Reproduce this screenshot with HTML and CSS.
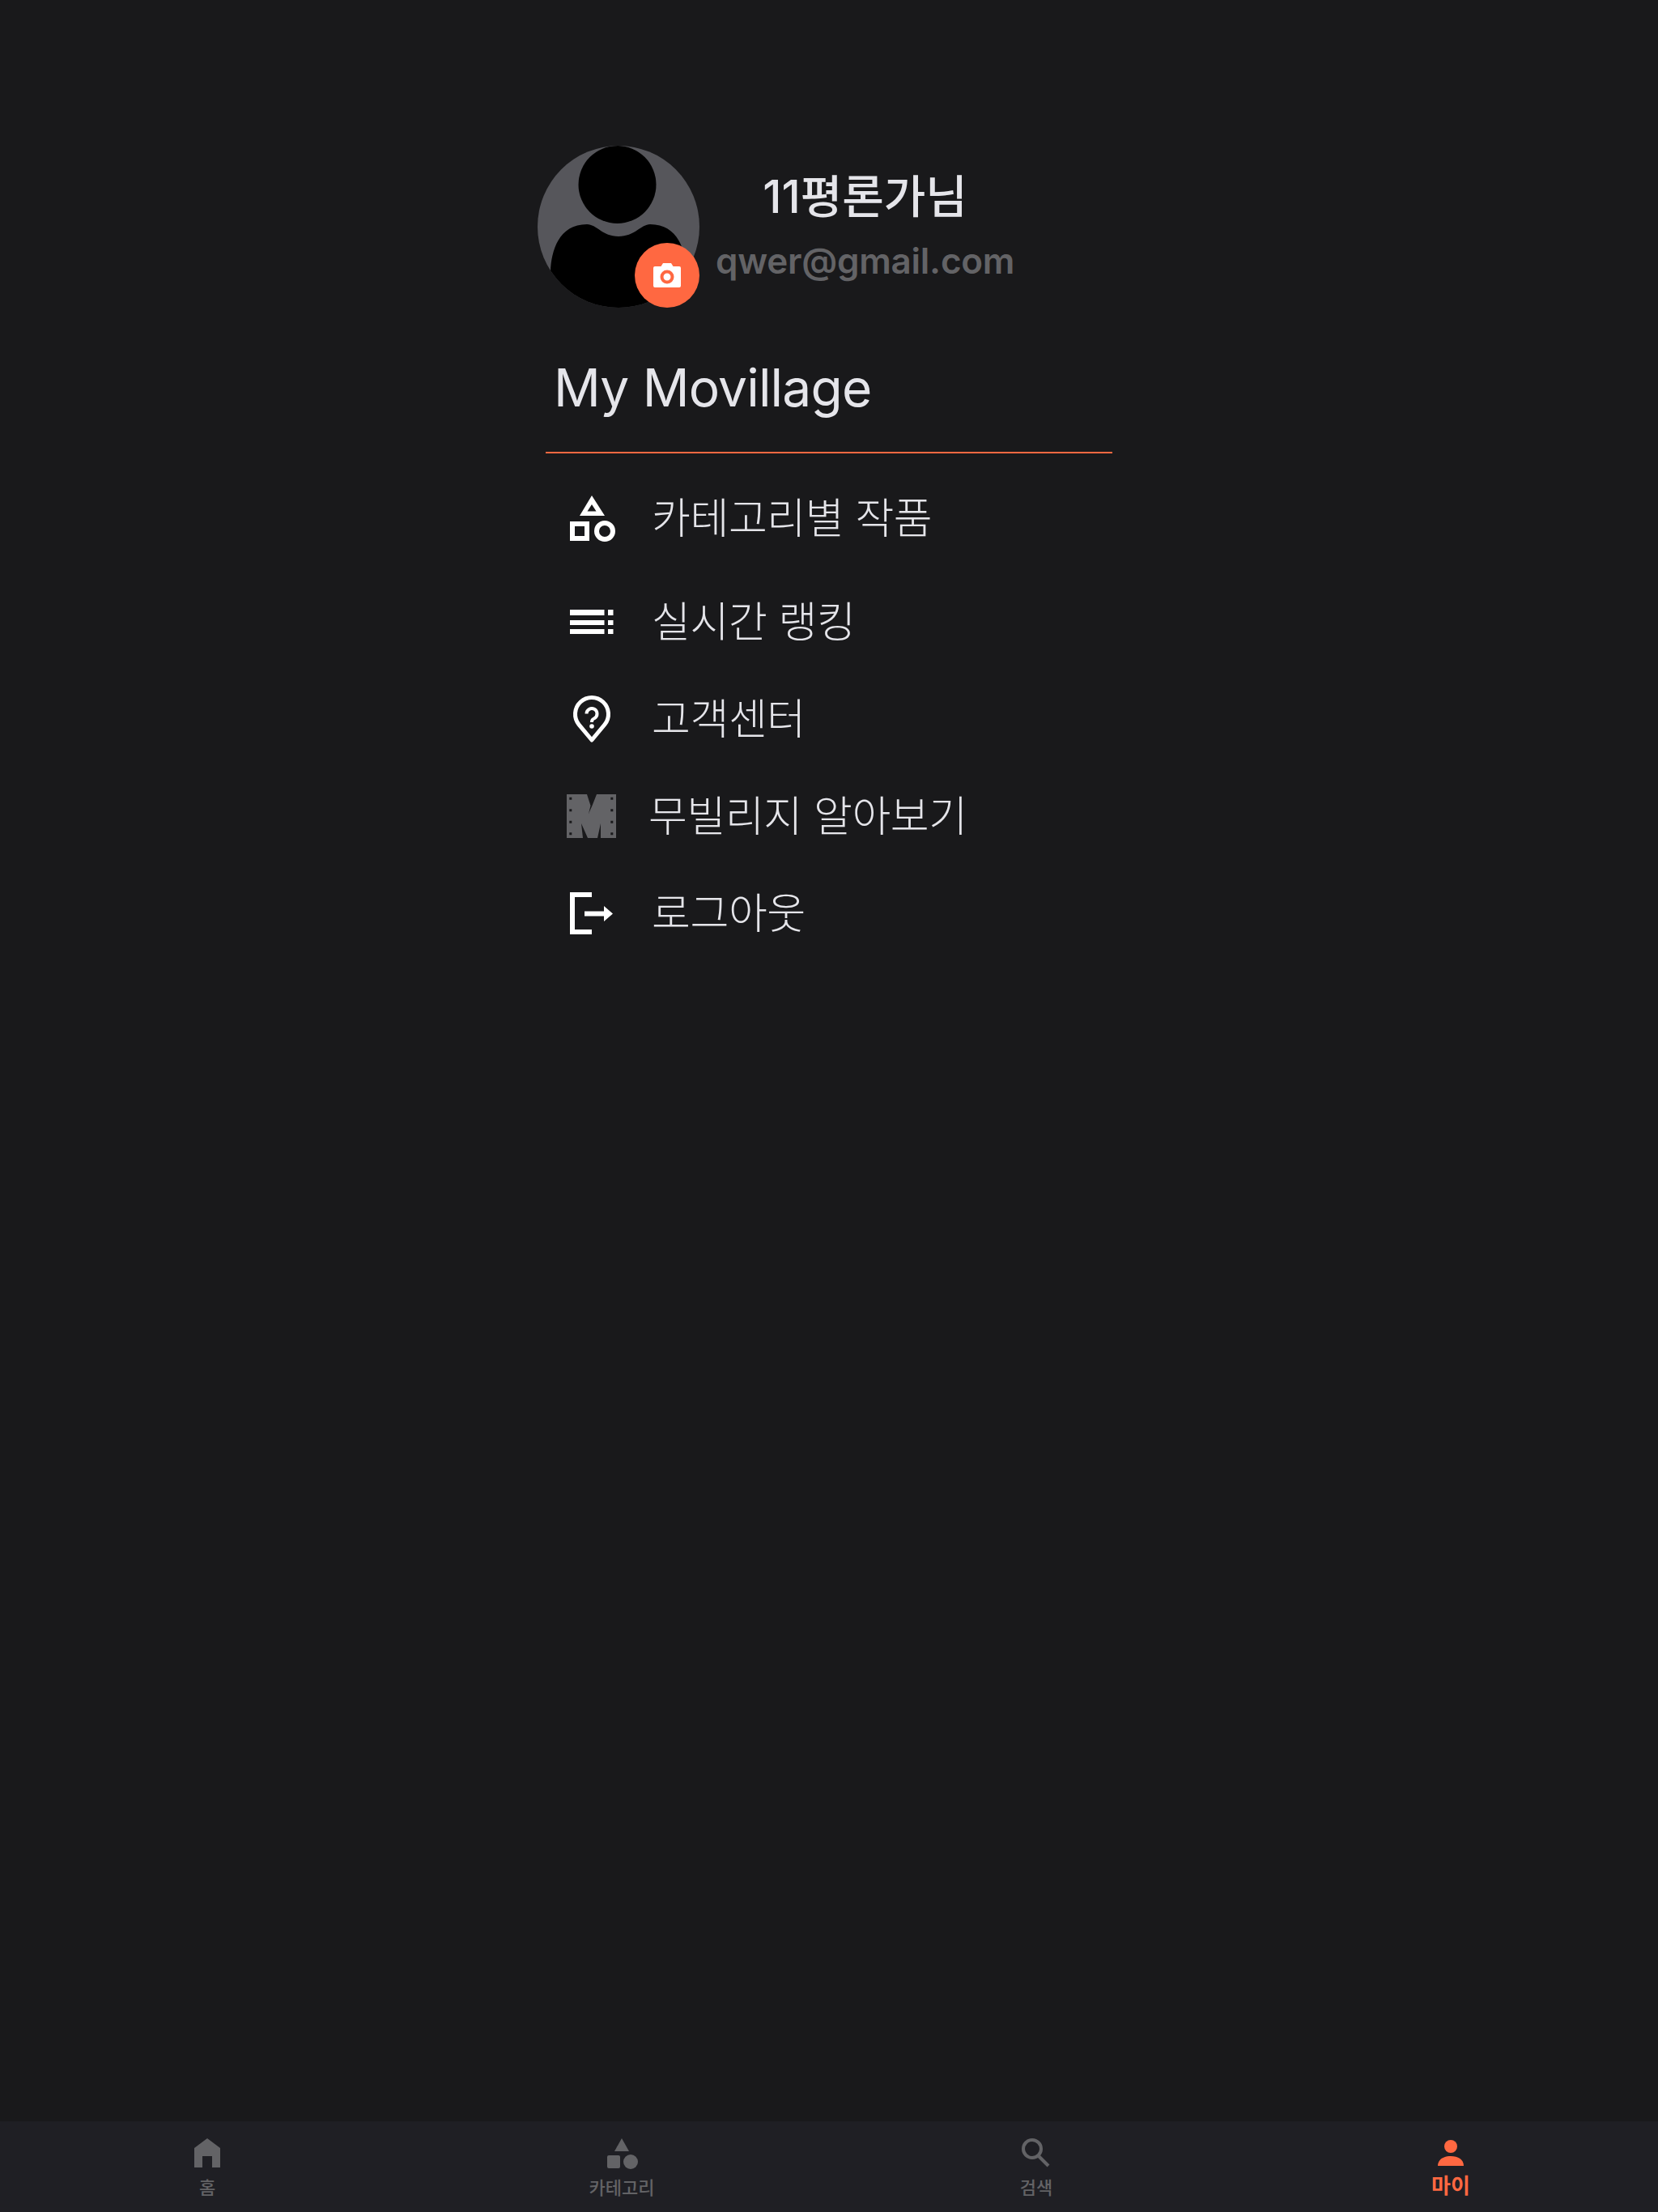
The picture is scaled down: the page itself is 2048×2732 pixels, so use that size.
FILE: index.html
```html
<!DOCTYPE html>
<html lang="ko">
<head>
<meta charset="utf-8">
<title>My Movillage</title>
<link rel="stylesheet" href="styles.css">
</head>
<body>
<div class="app">
  <main class="page">
    <section class="profile">
      <div class="avatar">
        <svg class="avatar-img" viewBox="0 0 200 200">
          <defs><clipPath id="av"><circle cx="100" cy="100" r="100"/></clipPath></defs>
          <circle cx="100" cy="100" r="100" fill="#56565b"/>
          <g clip-path="url(#av)" fill="#000">
            <ellipse cx="98.500" cy="48" rx="48" ry="48"/>
            <path d="M16 155C17 130 26 97 61 97C73 97 80 112 100 112C120 112 128 97 139 97C174 97 183 130 184 155L200 200H0Z"/>
          </g>
        </svg>
        <span class="camera">
          <svg viewBox="0 0 34 30" width="34" height="30">
            <path fill="#fff" d="M2 4H9.500L12 0H22L24.500 4H32A2 2 0 0 1 34 6V28A2 2 0 0 1 32 30H2A2 2 0 0 1 0 28V6A2 2 0 0 1 2 4Z"/>
            <circle cx="17" cy="17" r="6.500" fill="none" stroke="#ff6841" stroke-width="4"/>
          </svg>
        </span>
      </div>
      <div class="who">
        <div class="name">11평론가님</div>
        <div class="email">qwer@gmail.com</div>
      </div>
    </section>

    <h1 class="title">My Movillage</h1>

    <ul class="menu">
      <li class="row row-first">
        <svg class="ico" viewBox="0 0 64 60">
          <path fill="#fff" fill-rule="evenodd" d="M29 2L45 27H14ZM29 13L23.500 21.500H34.500Z"/>
          <rect x="5" y="37" width="18" height="18" fill="none" stroke="#fff" stroke-width="6"/>
          <circle cx="45" cy="46" r="10" fill="none" stroke="#fff" stroke-width="6"/>
        </svg>
        <span class="label">카테고리별 작품</span>
      </li>
      <li class="row">
        <svg class="ico" viewBox="0 0 64 60">
          <path fill="#fff" d="M2 15H44.500V22H2ZM2 28H44.500V34H2ZM2 39H44.500V45H2ZM49 15H55.500V22H49ZM49 28H55.500V34H49ZM49 39H55.500V45H49Z"/>
        </svg>
        <span class="label">실시간 랭킹</span>
      </li>
      <li class="row">
        <svg class="ico" viewBox="0 0 64 60">
          <path fill="none" stroke="#fff" stroke-width="5" stroke-linejoin="round" d="M29 56L13 36.800A20.500 20.500 0 1 1 45 36.800Z"/>
          <path fill="none" stroke="#fff" stroke-width="4" d="M22.500 23.500A6.500 6.500 0 1 1 32.500 29C30 30.500 29 31 29 34"/>
          <circle cx="29" cy="39" r="2.800" fill="#fff"/>
        </svg>
        <span class="label">고객센터</span>
      </li>
      <li class="row">
        <svg class="ico ico-logo" viewBox="0 0 61 54">
          <path fill="#636366" d="M0 0H25L29.500 14L27 24L31.500 14L37 0H61V54H42V36L38 54H26L18 36L20 54H0Z"/>
          <path fill="#19191b" d="M3.300 3.800h3v3h-3zM3.300 18.200h3v3h-3zM3.300 32.800h3v3h-3zM3.300 47.200h3v3h-3zM54.300 3.800h3v3h-3zM54.300 18.200h3v3h-3zM54.300 32.800h3v3h-3zM54.300 47.200h3v3h-3z"/>
        </svg>
        <span class="label label-logo">무빌리지 알아보기</span>
      </li>
      <li class="row">
        <svg class="ico" viewBox="0 0 64 60">
          <path fill="none" stroke="#fff" stroke-width="6" d="M29 7H5V53H29"/>
          <path fill="#fff" d="M20 27.500H44V21L55 30.500L44 40V33.500H20Z"/>
        </svg>
        <span class="label">로그아웃</span>
      </li>
    </ul>
  </main>

  <nav class="tabs">
    <a class="tab">
      <svg class="tab-ico" viewBox="0 0 48 40"><path fill="#636366" fill-rule="evenodd" d="M24 2L40 14V38H30V24H18V38H8V14Z"/></svg>
      <span>홈</span>
    </a>
    <a class="tab">
      <svg class="tab-ico" viewBox="0 0 48 40">
        <path fill="#636366" d="M24 2L33 18H15Z"/>
        <rect x="6" y="23" width="16" height="16" rx="2" fill="#636366"/>
        <circle cx="35" cy="31" r="9" fill="#636366"/>
      </svg>
      <span>카테고리</span>
    </a>
    <a class="tab">
      <svg class="tab-ico" viewBox="0 0 48 40">
        <circle cx="19" cy="15" r="11" fill="none" stroke="#636366" stroke-width="4"/>
        <path d="M27 24L39 36" stroke="#636366" stroke-width="4" fill="none"/>
      </svg>
      <span>검색</span>
    </a>
    <a class="tab tab-on">
      <svg class="tab-ico" viewBox="0 0 48 40">
        <circle cx="24" cy="12" r="8" fill="#ff6841"/>
        <path d="M8 36C8 28 15 24 24 24C33 24 40 28 40 36Z" fill="#ff6841"/>
      </svg>
      <span>마이</span>
    </a>
  </nav>
</div>
</body>
</html>
```

FILE: styles.css
```css
* { box-sizing: border-box; }
html, body { margin: 0; padding: 0; }
body {
  background: #19191b;
  color: #e5e5ea;
  font-family: Inter, "Noto Sans CJK KR", sans-serif;
}
.app {
  min-height: 2732px;
  display: flex;
  flex-direction: column;
}
.page {
  flex: 1;
  width: 720px;
  margin: 0 auto;
  padding-top: 180px;
}
.profile {
  display: flex;
  align-items: flex-start;
  gap: 20px;
}
.avatar {
  position: relative;
  width: 200px;
  height: 200px;
  flex: none;
}
.avatar-img { display: block; width: 200px; height: 200px; }
.camera {
  position: absolute;
  right: 0;
  bottom: 0;
  width: 80px;
  height: 80px;
  border-radius: 50%;
  background: #ff6841;
  display: flex;
  align-items: center;
  justify-content: center;
}
.camera svg { display: block; }
.who {
  display: flex;
  flex-direction: column;
  align-items: center;
  padding-top: 29px;
  gap: 16px;
}
.name {
  font-size: 56px;
  line-height: 68px;
  font-weight: 500;
}
.email {
  font-size: 44px;
  line-height: 58px;
  font-weight: 600;
  letter-spacing: -0.25px;
  color: #636366;
}
.title {
  margin: 60px 0 0 20px;
  font-size: 64px;
  line-height: 78px;
  font-weight: 400;
  letter-spacing: -0.8px;
}
.menu {
  list-style: none;
  margin: 40px 10px 0;
  padding: 20px 0 0;
  border-top: 2px solid #ff6841;
}
.row {
  display: flex;
  align-items: center;
  height: 120px;
  padding-left: 28px;
  gap: 39px;
}
.row-first { margin-bottom: 8px; }
.ico {
  display: block;
  width: 64px;
  height: 60px;
  flex: none;
}
.ico-logo { width: 61px; height: 54px; margin-left: -2px; margin-right: -1px; }
.label {
  font-size: 52px;
  line-height: 64px;
  font-weight: 300;
  letter-spacing: -0.4px;
  color: #e5e5ea;
  white-space: nowrap;
  padding-top: 2px;
}
.label-logo { margin-left: 2px; }
.tabs {
  height: 112px;
  background: #1f1f24;
  display: grid;
  grid-template-columns: repeat(4, 1fr);
}
.tab {
  display: flex;
  flex-direction: column;
  align-items: center;
  padding-top: 19px;
  color: #636366;
  font-size: 22px;
  line-height: 30px;
  font-weight: 500;
}
.tab-ico { display: block; width: 48px; height: 40px; margin-bottom: 8px; }
.tab-on { color: #ff6841; font-size: 26px; font-weight: 700; }
.tab-on span { margin-top: -2px; }
```
